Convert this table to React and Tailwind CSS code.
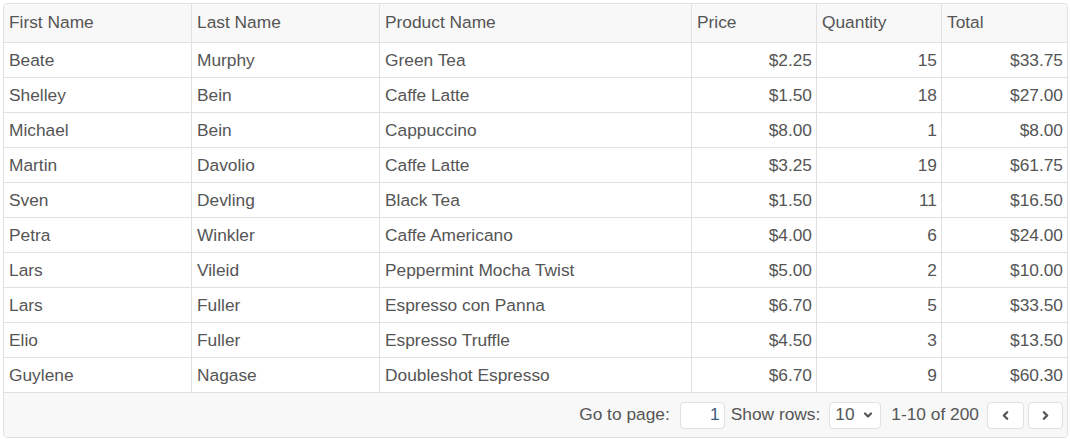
import { ChevronDown, ChevronLeft, ChevronRight } from "lucide-react"

const rows = [
    ["Beate", "Murphy", "Green Tea", "$2.25", "15", "$33.75"],
    ["Shelley", "Bein", "Caffe Latte", "$1.50", "18", "$27.00"],
    ["Michael", "Bein", "Cappuccino", "$8.00", "1", "$8.00"],
    ["Martin", "Davolio", "Caffe Latte", "$3.25", "19", "$61.75"],
    ["Sven", "Devling", "Black Tea", "$1.50", "11", "$16.50"],
    ["Petra", "Winkler", "Caffe Americano", "$4.00", "6", "$24.00"],
    ["Lars", "Vileid", "Peppermint Mocha Twist", "$5.00", "2", "$10.00"],
    ["Lars", "Fuller", "Espresso con Panna", "$6.70", "5", "$33.50"],
    ["Elio", "Fuller", "Espresso Truffle", "$4.50", "3", "$13.50"],
    ["Guylene", "Nagase", "Doubleshot Espresso", "$6.70", "9", "$60.30"],
]

const headers = ["First Name", "Last Name", "Product Name", "Price", "Quantity", "Total"]
const cols = "grid grid-cols-[188px_188px_312px_125px_125px_125px]"

const App = () => {
    return (
        <div className="p-[3px] bg-white font-['Liberation_Sans',Arial,sans-serif] text-[17.33px] text-[#555]">
            <div className="w-[1065px] border border-[#e0e0e0] rounded-[4px] overflow-hidden">
                <div className={`${cols} h-[39px] bg-[#f8f8f8] border-b border-[#e0e0e0]`}>
                    {headers.map((h, i) => (
                        <div
                            key={h}
                            className={`flex items-center pl-[5px] ${i < 5 ? "border-r border-[#e0e0e0]" : ""}`}
                        >
                            {h}
                        </div>
                    ))}
                </div>
                {rows.map((r, ri) => (
                    <div key={ri} className={`${cols} h-[35px] bg-white border-b border-[#e0e0e0]`}>
                        {r.map((c, i) => (
                            <div
                                key={i}
                                className={`flex items-center pt-[1px] ${i >= 3 ? "justify-end pr-[4px]" : "pl-[5px]"} ${i < 5 ? "border-r border-[#e0e0e0]" : ""}`}
                            >
                                {c}
                            </div>
                        ))}
                    </div>
                ))}
                <div className="h-[44px] bg-[#f8f8f8] flex items-center justify-end pr-[4px]">
                    <span>Go to page:</span>
                    <div className="ml-[10px] w-[45px] h-[27px] bg-white border border-[#e0e0e0] rounded-[4px] flex items-center justify-end pr-[4px] text-[#3d5c7a]">
                        1
                    </div>
                    <span className="ml-[6px]">Show rows:</span>
                    <div className="ml-[9px] w-[52px] h-[27px] bg-white border border-[#e0e0e0] rounded-[4px] flex items-center pl-[5px] gap-[7px]">
                        <span>10</span>
                        <ChevronDown size={12} strokeWidth={4.5} className="text-[#555]" />
                    </div>
                    <span className="ml-[10px]">1-10 of 200</span>
                    <div className="ml-[8px] flex gap-[4px]">
                        <button className="w-[37px] h-[27px] bg-white border border-[#e0e0e0] rounded-[4px] flex items-center justify-center">
                            <ChevronLeft size={13} strokeWidth={4.5} className="text-[#555]" />
                        </button>
                        <button className="w-[35px] h-[27px] bg-white border border-[#e0e0e0] rounded-[4px] flex items-center justify-center">
                            <ChevronRight size={13} strokeWidth={4.5} className="text-[#555]" />
                        </button>
                    </div>
                </div>
            </div>
        </div>
    )
}

export default App
